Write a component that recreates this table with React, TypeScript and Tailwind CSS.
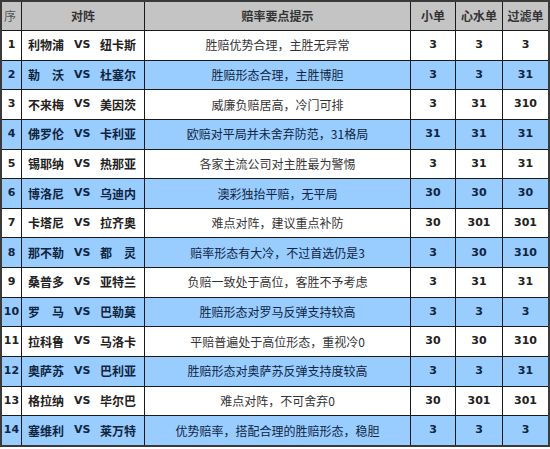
const rows = [
  { no: 1, home: '利物浦', away: '纽卡斯', tip: '胜赔优势合理，主胜无异常', a: '3', b: '3', c: '3' },
  { no: 2, home: '勒　沃', away: '杜塞尔', tip: '胜赔形态合理，主胜博胆', a: '3', b: '3', c: '31' },
  { no: 3, home: '不来梅', away: '美因茨', tip: '威廉负赔居高，冷门可排', a: '3', b: '31', c: '310' },
  { no: 4, home: '佛罗伦', away: '卡利亚', tip: '欧赔对平局并未舍弃防范，31格局', a: '31', b: '31', c: '31' },
  { no: 5, home: '锡耶纳', away: '热那亚', tip: '各家主流公司对主胜最为警惕', a: '3', b: '31', c: '31' },
  { no: 6, home: '博洛尼', away: '乌迪内', tip: '澳彩独抬平赔，无平局', a: '30', b: '30', c: '30' },
  { no: 7, home: '卡塔尼', away: '拉齐奥', tip: '难点对阵，建议重点补防', a: '30', b: '301', c: '301' },
  { no: 8, home: '那不勒', away: '都　灵', tip: '赔率形态有大冷，不过首选仍是3', a: '3', b: '30', c: '310' },
  { no: 9, home: '桑普多', away: '亚特兰', tip: '负赔一致处于高位，客胜不予考虑', a: '3', b: '31', c: '31' },
  { no: 10, home: '罗　马', away: '巴勒莫', tip: '胜赔形态对罗马反弹支持较高', a: '3', b: '3', c: '3' },
  { no: 11, home: '拉科鲁', away: '马洛卡', tip: '平赔普遍处于高位形态，重视冷0', a: '30', b: '30', c: '310' },
  { no: 12, home: '奥萨苏', away: '巴利亚', tip: '胜赔形态对奥萨苏反弹支持度较高', a: '3', b: '3', c: '31' },
  { no: 13, home: '格拉纳', away: '毕尔巴', tip: '难点对阵，不可舍弃0', a: '30', b: '301', c: '301' },
  { no: 14, home: '塞维利', away: '莱万特', tip: '优势赔率，搭配合理的胜赔形态，稳胆', a: '3', b: '3', c: '3' },
]

const cjk = "font-['SimSun','Noto_Sans_CJK_SC',sans-serif]"
const num = "font-['DejaVu_Sans','Noto_Sans_CJK_SC',sans-serif]"

export default function App() {
  return (
    <div className="w-[550px] h-[449px] bg-white">
      <div
        className={`grid grid-cols-[19px_122px_265px_44px_46px_45px] grid-rows-[28px_repeat(14,minmax(0,1fr))] gap-px h-[447px] bg-[#1a1a1a] border-2 border-[#3a3a3a] ${cjk}`}
      >
        {/* Header */}
        <div className="bg-[#c4c4c4] flex items-center pl-[2px] text-[12px] text-[#555]">序</div>
        <div className="bg-[#c4c4c4] flex items-center justify-center text-[12px] font-bold text-[#333]">对阵</div>
        <div className="bg-[#c4c4c4] flex items-center justify-center text-[12px] font-bold text-[#333]">赔率要点提示</div>
        <div className="bg-[#c4c4c4] flex items-center justify-center text-[12px] font-bold text-[#333]">小单</div>
        <div className="bg-[#c4c4c4] flex items-center justify-center text-[12px] font-bold text-[#333]">心水单</div>
        <div className="bg-[#c4c4c4] flex items-center justify-center text-[12px] font-bold text-[#333]">过滤单</div>

        {rows.map((r) => {
          const blue = r.no % 2 === 0
          const bg = blue ? 'bg-[#99ccff] text-[#0f2540]' : 'bg-white text-[#222]'
          return (
            <div key={r.no} className="contents">
              <div className={`${bg} ${num} flex items-center justify-center text-[11px] font-bold`}>{r.no}</div>
              <div className={`${bg} flex items-center pl-[6px] text-[12px] font-bold`}>
                <span className="w-[46px] whitespace-nowrap">{r.home}</span>
                <span className={`w-[26px] ${num} text-[11px]`}>VS</span>
                <span className="whitespace-nowrap">{r.away}</span>
              </div>
              <div className={`${bg} flex items-center justify-center text-[12px] ${blue ? '' : 'text-[#333]'}`}>{r.tip}</div>
              <div className={`${bg} ${num} flex items-center justify-center text-[11px] font-bold`}>{r.a}</div>
              <div className={`${bg} ${num} flex items-center justify-center text-[11px] font-bold`}>{r.b}</div>
              <div className={`${bg} ${num} flex items-center justify-center text-[11px] font-bold`}>{r.c}</div>
            </div>
          )
        })}
      </div>
    </div>
  )
}
